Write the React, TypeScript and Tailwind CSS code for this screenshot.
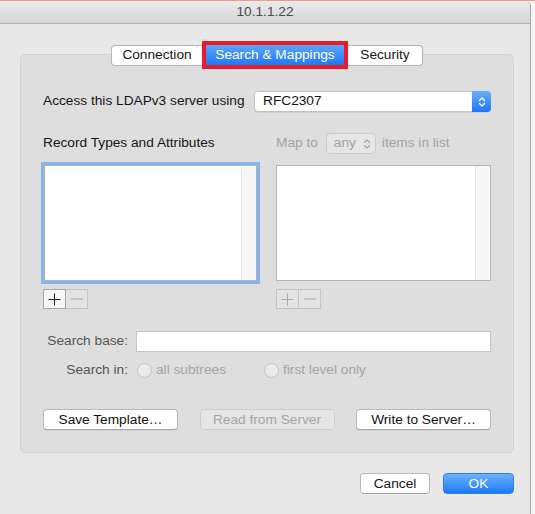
function Chevrons({ color }: { color: string }) {
  return (
    <svg width="8" height="12" viewBox="0 0 8 12" fill="none" stroke={color} strokeWidth="1.3" strokeLinecap="round" strokeLinejoin="round">
      <path d="M1.5 4.5 L4 2 L6.5 4.5" />
      <path d="M1.5 7.5 L4 10 L6.5 7.5" />
    </svg>
  )
}

function PlusMinus({ disabled }: { disabled?: boolean }) {
  const plusColor = disabled ? '#a9a9a9' : '#1e1e1e'
  return (
    <div className="flex h-[20px]">
      <button
        className={`w-[23px] h-[20px] flex items-center justify-center border ${
          disabled ? 'border-[#c4c4c4] bg-[#e3e3e3]' : 'border-[#a6a6a6] bg-[#f6f6f6]'
        }`}
      >
        <svg width="13" height="13" viewBox="0 0 13 13" stroke={plusColor} strokeWidth="1">
          <path d="M6.5 0.5 V12.5 M0.5 6.5 H12.5" />
        </svg>
      </button>
      <button className="w-[22px] h-[20px] flex items-center justify-center border border-l-0 border-[#c4c4c4] bg-[#e3e3e3]">
        <svg width="12" height="2" viewBox="0 0 12 2" stroke="#a9a9a9" strokeWidth="1">
          <path d="M0 1 H12" />
        </svg>
      </button>
    </div>
  )
}

function ListBox({ focused }: { focused?: boolean }) {
  return (
    <div
      className={`h-[116px] flex bg-white border border-[#b5b5b5] ${
        focused ? 'w-[213px] ml-[1px] shadow-[0_0_0_3px_#86b4ee]' : 'w-[215px]'
      }`}
    >
      <div className="flex-1" />
      <div className="w-[15px] bg-[#f7f7f7] border-l border-[#e3e3e3]" />
    </div>
  )
}

function PushButton({ label, disabled }: { label: string; disabled?: boolean }) {
  return (
    <button
      className={`w-[135px] h-[21px] rounded-[4px] border leading-none ${
        disabled
          ? 'bg-[#e5e5e5] border-[#cdcdcd] text-[#a5a5a5]'
          : 'bg-white border-[#b9b9b9] border-b-[#a3a3a3] text-[#111] shadow-[0_1px_0_rgba(0,0,0,0.05)]'
      }`}
    >
      {label}
    </button>
  )
}

function Radio({ label }: { label: string }) {
  return (
    <div className="flex items-center gap-[4px]">
      <span className="w-[15px] h-[15px] rounded-full border border-[#c3c3c3] bg-[#ebebeb]" />
      <span className="text-[#a4a4a4]">{label}</span>
    </div>
  )
}

export default function App() {
  return (
    <div className="w-[535px] h-[514px] bg-[#f6f6f6] flex flex-col overflow-hidden font-['Liberation_Sans',Arial,sans-serif] text-[13.7px] text-[#151515]">
      <div className="h-[1px] bg-[#e6a08b]" />
      <div className="w-[531px] flex-1 flex flex-col bg-[#e8e8e8] border-r border-[#a3a3a3] rounded-tr-[5px]">
        {/* Title bar */}
        <div className="h-[23px] pt-[1px] flex items-center justify-center bg-gradient-to-b from-[#ececec] to-[#d4d4d4] border-b border-[#b2b2b2] rounded-tr-[5px] text-[#4b4b4b]">
          10.1.1.22
        </div>

        <div className="flex flex-col pl-[20px] pr-[16px]">
          {/* Tabs */}
          <div className="relative z-10 mt-[17px] h-[28px] flex items-center justify-center">
            <div className="w-[91px] h-[21px] flex items-center justify-center bg-white border border-[#b5b5b5] border-r-0 rounded-l-[4px]">
              Connection
            </div>
            <div className="w-[146px] h-[28px] border-[4px] border-[#ea1a2b] bg-[#ea1a2b]">
              <div className="h-full flex items-center justify-center bg-gradient-to-b from-[#5aa4fb] to-[#1f78f6] text-white">
                Search &amp; Mappings
              </div>
            </div>
            <div className="w-[75px] h-[21px] flex items-center justify-center bg-white border border-[#b5b5b5] border-l-0 rounded-r-[4px]">
              Security
            </div>
          </div>

          {/* Group box */}
          <div className="-mt-[15px] bg-[#dedede] border border-[#d3d3d3] rounded-[5px] pl-[22px] pr-[22px] pt-[36px] pb-[22px] flex flex-col">
            <div className="h-[21px] flex items-center justify-between">
              <span>Access this LDAPv3 server using</span>
              <div className="w-[237px] h-[21px] flex bg-white border border-[#c2c2c2] rounded-[4px] shadow-[0_1px_0_rgba(0,0,0,0.06)]">
                <span className="flex-1 flex items-center pl-[8px]">RFC2307</span>
                <span className="w-[19px] -my-[1px] -mr-[1px] flex items-center justify-center rounded-r-[4px] bg-gradient-to-b from-[#68aefb] to-[#1c74f6]">
                  <Chevrons color="#ffffff" />
                </span>
              </div>
            </div>

            <div className="mt-[21px] h-[21px] flex items-center">
              <div className="w-[233px]">Record Types and Attributes</div>
              <div className="flex-1 flex items-center text-[#a2a2a2]">
                <span>Map to</span>
                <div className="ml-[8px] w-[50px] h-[21px] flex items-center justify-between pl-[7px] pr-[4px] bg-[#e6e6e6] border border-[#cacaca] rounded-[4px]">
                  <span>any</span>
                  <Chevrons color="#a8a8a8" />
                </div>
                <span className="ml-[6px]">items in list</span>
              </div>
            </div>

            <div className="mt-[11px] flex">
              <div className="w-[233px]">
                <ListBox focused />
              </div>
              <ListBox />
            </div>

            <div className="mt-[8px] flex">
              <div className="w-[233px]">
                <PlusMinus />
              </div>
              <PlusMinus disabled />
            </div>

            <div className="mt-[22px] h-[21px] flex items-center gap-[8px]">
              <span className="w-[85px] text-right text-[#555]">Search base:</span>
              <div className="flex-1 h-[21px] bg-white border border-[#c5c5c5]" />
            </div>

            <div className="mt-[10px] h-[16px] flex items-center">
              <span className="w-[85px] text-right text-[#555]">Search in:</span>
              <div className="ml-[9px] w-[127px]">
                <Radio label="all subtrees" />
              </div>
              <Radio label="first level only" />
            </div>

            <div className="mt-[31px] flex justify-between">
              <PushButton label="Save Template…" />
              <PushButton label="Read from Server" disabled />
              <PushButton label="Write to Server…" />
            </div>
          </div>

          {/* Footer */}
          <div className="mt-[20px] flex justify-end gap-[13px]">
            <button className="w-[70px] h-[21px] rounded-[4px] bg-white border border-[#b9b9b9] border-b-[#a3a3a3]">
              Cancel
            </button>
            <button className="w-[71px] h-[21px] rounded-[4px] bg-gradient-to-b from-[#6ab2fb] to-[#1b78f8] border border-[#2a7ef0] text-white">
              OK
            </button>
          </div>
        </div>
      </div>
    </div>
  )
}
